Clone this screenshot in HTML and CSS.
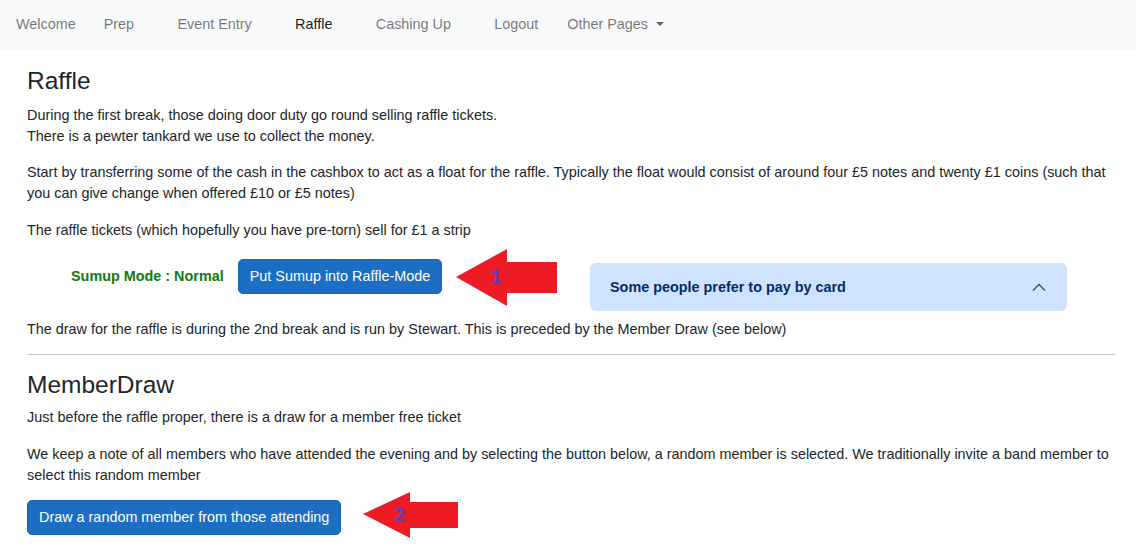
FILE: index.html
```html
<!DOCTYPE html>
<html lang="en">
<head>
<meta charset="utf-8">
<title>Raffle</title>
<link rel="stylesheet" href="styles.css">
</head>
<body>
<nav class="navbar">
  <a class="nav-link">Welcome</a>
  <a class="nav-link wide">Prep</a>
  <a class="nav-link wide">Event Entry</a>
  <a class="nav-link wide active">Raffle</a>
  <a class="nav-link wide">Cashing Up</a>
  <a class="nav-link">Logout</a>
  <a class="nav-link dropdown-toggle">Other Pages</a>
</nav>
<main class="content">
  <h3 class="title first">Raffle</h3>
  <p class="intro">During the first break, those doing door duty go round selling raffle tickets.<br>There is a pewter tankard we use to collect the money.</p>
  <p>Start by transferring some of the cash in the cashbox to act as a float for the raffle. Typically the float would consist of around four £5 notes and twenty £1 coins (such that you can give change when offered £10 or £5 notes)</p>
  <p>The raffle tickets (which hopefully you have pre-torn) sell for £1 a strip</p>
  <div class="sumup-row">
    <div class="sumup-left">
      <span class="sumup-status">Sumup Mode : Normal</span>
      <button class="btn">Put Sumup into Raffle-Mode</button>
    </div>
    <div class="accordion">
      <span>Some people prefer to pay by card</span>
      <svg class="chevron" width="14" height="8" viewBox="0 0 14 8"><polyline points="1,7.5 7,1.5 13,7.5" fill="none" stroke="#3b4a63" stroke-width="1.4"/></svg>
    </div>
  </div>
  <p class="before-rule">The draw for the raffle is during the 2nd break and is run by Stewart. This is preceded by the Member Draw (see below)</p>
  <hr>
  <h3 class="title">MemberDraw</h3>
  <p>Just before the raffle proper, there is a draw for a member free ticket</p>
  <p>We keep a note of all members who have attended the evening and by selecting the button below, a random member is selected. We traditionally invite a band member to select this random member</p>
  <div class="actions">
    <button class="btn">Draw a random member from those attending</button>
  </div>
</main>
<svg class="annotations" width="1136" height="552" viewBox="0 0 1136 552">
  <polygon points="456,277 507,249 507,262 557,262 557,293 507,293 507,306" fill="#ed1c24"/>
  <text x="496" y="284" class="anno-num" text-anchor="middle">1</text>
  <polygon points="363,514 410,492 410,502 458,502 458,528 410,528 410,538" fill="#ed1c24"/>
  <text x="400" y="522" class="anno-num" text-anchor="middle">2</text>
</svg>
</body>
</html>
```
FILE: styles.css
```css
html, body {
  margin: 0;
  padding: 0;
}
body {
  font-family: "Liberation Sans", Arial, sans-serif;
  font-size: 14.4px;
  line-height: 21px;
  color: #212529;
  background: #fff;
  position: relative;
  width: 1136px;
  height: 552px;
  overflow: hidden;
}
.navbar {
  height: 50px;
  background: #f8f9fa;
  display: flex;
  align-items: center;
  padding: 0 0 2px 2px;
  box-sizing: border-box;
}
.nav-link {
  color: rgba(0, 0, 0, 0.55);
  padding: 0 14px;
  display: flex;
  align-items: center;
}
.nav-link.wide {
  padding-right: 29.3px;
}
.nav-link.active {
  color: rgba(0, 0, 0, 0.9);
}
.dropdown-toggle {
  padding-left: 15px;
}
.dropdown-toggle::after {
  content: "";
  display: inline-block;
  margin-left: 8px;
  border-top: 4.5px solid rgba(0, 0, 0, 0.6);
  border-left: 4px solid transparent;
  border-right: 4px solid transparent;
}
.content {
  padding: 0 21px 0 27px;
}
.title {
  font-size: 24.5px;
  font-weight: normal;
  line-height: 29px;
  margin: 15px 0 8px;
}
.title.first {
  margin: 16px 0 10px;
}
p {
  margin: 0 0 16px;
}
p.intro {
  margin-bottom: 15px;
}
p.before-rule {
  margin-bottom: 14px;
}
hr {
  border: 0;
  border-top: 1px solid rgba(33, 37, 41, 0.25);
  margin: 14px 0 15px;
}
.actions {
  display: flex;
  margin-top: -2px;
}
.btn {
  font-family: inherit;
  font-size: 14.4px;
  line-height: 21px;
  color: #fff;
  background: #1b6ec2;
  border: 1px solid #1861ac;
  border-radius: 5px;
  padding: 6px 11px;
  cursor: pointer;
}
.sumup-row {
  display: flex;
  align-items: flex-start;
  margin-bottom: 8px;
}
.sumup-left {
  flex: 0 0 563px;
  box-sizing: border-box;
  padding: 2px 0 0 44px;
  display: flex;
  align-items: center;
  gap: 14px;
}
.sumup-status {
  color: #137a13;
  font-weight: bold;
}
.accordion {
  width: 477px;
  height: 48px;
  margin-top: 6px;
  box-sizing: border-box;
  background: #cfe2ff;
  border-radius: 6px;
  color: #052c65;
  font-weight: bold;
  padding: 0 21px 0 20px;
  display: flex;
  align-items: center;
  justify-content: space-between;
}
.annotations {
  position: absolute;
  left: 0;
  top: 0;
  pointer-events: none;
}
.anno-num {
  font-family: "Liberation Sans", Arial, sans-serif;
  font-size: 20px;
  font-weight: bold;
  fill: #5b3fc4;
}
```
